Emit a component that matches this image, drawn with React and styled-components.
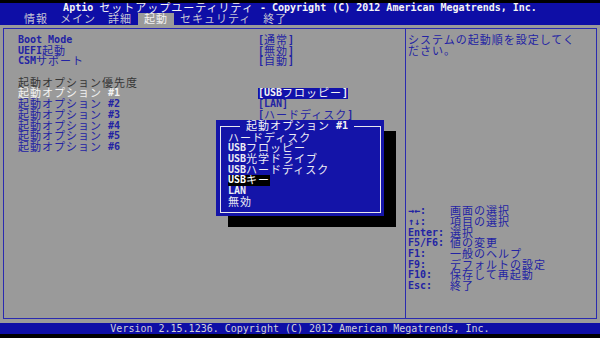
import React from 'react';
import styled, { createGlobalStyle } from 'styled-components';

const ROW = 10.7;

const Global = createGlobalStyle`
  html, body {
    margin: 0;
    padding: 0;
    background: #000;
  }
  * {
    box-sizing: border-box;
  }
`;

const Screen = styled.div`
  position: relative;
  width: 600px;
  height: 338px;
  overflow: hidden;
  background: #000;
  padding-top: 3px;
  font-family: "DejaVu Sans Mono", "Liberation Mono", monospace;
  font-size: 10px;
  font-weight: bold;
  display: flex;
  flex-direction: column;
`;

const Jp = styled.span`
  display: inline-block;
  vertical-align: top;
  position: relative;
  top: -1px;
  height: ${ROW}px;
  line-height: ${ROW}px;
  font-family: "Noto Sans CJK JP", "Noto Sans CJK SC", sans-serif;
  font-size: 11px;
  font-weight: 400;
  letter-spacing: 1px;
`;

// split a string into latin and japanese runs so each CJK glyph takes two cells
const Tx = ({ children }) => {
  const parts = String(children).split(/([\u3000-\u30ff\u3400-\u9fff\uff00-\uffef]+)/);
  return parts.map((p, i) => (i % 2 ? <Jp key={i}>{p}</Jp> : p));
};

const Header = styled.div`
  background: #0e0ea6;
  height: 22px;
`;

const Title = styled.div`
  height: 10px;
  line-height: 10px;
  text-align: center;
  color: #f4f4f4;
  white-space: pre;
`;

const Tabs = styled.div`
  display: flex;
  height: 12px;
  padding-left: 18px;
`;

const Tab = styled.div`
  height: 12px;
  line-height: 12px;
  padding: 1px 6px 0;
  white-space: pre;
  color: ${(p) => (p.$active ? '#f2f2f2' : '#c4c4d4')};
  background: ${(p) => (p.$active ? '#9a9a9a' : 'transparent')};
`;

const Body = styled.div`
  background: #9a9a9a;
  height: 298px;
  padding: 3px 3px 4px 3px;
  display: flex;
  flex-direction: column;
`;

const Frame = styled.div`
  flex: 1;
  display: flex;
  border: 1px solid #2a2ab0;
`;

const MainPane = styled.div`
  width: 402px;
  border-right: 1px solid #2a2ab0;
  padding: 6px 0 0 14px;
`;

const Row = styled.div`
  display: grid;
  grid-template-columns: 240px auto;
  justify-content: start;
  height: ${ROW}px;
  line-height: ${ROW}px;
  white-space: pre;
  color: ${(p) => p.$color || '#2323a4'};
`;

const Value = styled.span`
  color: ${(p) => (p.$selected ? '#f4f4f4' : '#2323a4')};
  background: ${(p) => (p.$selected ? '#1212aa' : 'transparent')};
`;

const HelpPane = styled.div`
  flex: 1;
  padding: 6px 0 0 2px;
  color: #2323a4;
`;

const Line = styled.div`
  height: ${ROW}px;
  line-height: ${ROW}px;
  white-space: pre;
`;

const Keys = styled.div`
  margin-top: ${ROW * 14}px;
  display: grid;
  grid-template-columns: 42px auto;
  justify-content: start;
  grid-auto-rows: ${ROW}px;
  line-height: ${ROW}px;
  white-space: pre;
`;

const Footer = styled.div`
  background: #0e0ea6;
  height: 11px;
  line-height: 11px;
  text-align: center;
  color: #d0d0d8;
  font-weight: normal;
  white-space: pre;
`;

const Popup = styled.div`
  position: absolute;
  left: 216px;
  top: 120px;
  width: 168px;
  background: #1414a8;
  box-shadow: 12px 11px 0 #000;
  padding: 1px 3px 3px 4px;
`;

const PopFrame = styled.fieldset`
  margin: 0;
  padding: 1px 0 4px 7px;
  border: 1px solid #e8e8ee;
  min-width: 0;
`;

const PopTitle = styled.legend`
  margin-left: 12px;
  padding: 0 6px;
  height: ${ROW}px;
  line-height: ${ROW}px;
  color: #f4f4f4;
  white-space: pre;
`;

const Item = styled.div`
  width: fit-content;
  height: ${ROW}px;
  line-height: ${ROW}px;
  white-space: pre;
  color: ${(p) => (p.$selected ? '#ffffff' : '#ececf4')};
  background: ${(p) => (p.$selected ? '#000' : 'transparent')};
`;

const tabs = ['情報', 'メイン', '詳細', '起動', 'セキュリティ', '終了'];

const settings = [
  { label: 'Boot Mode', value: '[通常]' },
  { label: 'UEFI起動', value: '[無効]' },
  { label: 'CSMサポート', value: '[自動]' },
  { label: '' },
  { label: '起動オプション優先度', color: '#363636' },
  { label: '起動オプション #1', value: '[USBフロッピー]', color: '#f2f2f2', selected: true },
  { label: '起動オプション #2', value: '[LAN]' },
  { label: '起動オプション #3', value: '[ハードディスク]' },
  { label: '起動オプション #4' },
  { label: '起動オプション #5' },
  { label: '起動オプション #6' },
];

const keys = [
  ['→←:', '画面の選択'],
  ['↑↓:', '項目の選択'],
  ['Enter:', '選択'],
  ['F5/F6:', '値の変更'],
  ['F1:', '一般のヘルプ'],
  ['F9:', 'デフォルトの設定'],
  ['F10:', '保存して再起動'],
  ['Esc:', '終了'],
];

const options = ['ハードディスク', 'USBフロッピー', 'USB光学ドライブ', 'USBハードディスク', 'USBキー', 'LAN', '無効'];

const App = () => (
  <>
    <Global />
    <Screen>
      <Header>
        <Title>
          <Tx>Aptio セットアップユーティリティ - Copyright (C) 2012 American Megatrends, Inc.</Tx>
        </Title>
        <Tabs>
          {tabs.map((t) => (
            <Tab key={t} $active={t === '起動'}>
              <Tx>{t}</Tx>
            </Tab>
          ))}
        </Tabs>
      </Header>

      <Body>
        <Frame>
          <MainPane>
            {settings.map((s, i) => (
              <Row key={i} $color={s.color}>
                <span>
                  <Tx>{s.label}</Tx>
                </span>
                {s.value ? (
                  <Value $selected={s.selected}>
                    <Tx>{s.value}</Tx>
                  </Value>
                ) : (
                  <span />
                )}
              </Row>
            ))}
          </MainPane>
          <HelpPane>
            <Line><Tx>システムの起動順を設定してく</Tx></Line>
            <Line><Tx>ださい。</Tx></Line>
            <Keys>
              {keys.map(([k, d]) => (
                <React.Fragment key={k}>
                  <span>{k}</span>
                  <span><Tx>{d}</Tx></span>
                </React.Fragment>
              ))}
            </Keys>
          </HelpPane>
        </Frame>
      </Body>

      <Footer>Version 2.15.1236. Copyright (C) 2012 American Megatrends, Inc.</Footer>

      <Popup>
        <PopFrame>
          <PopTitle>
            <Tx>起動オプション #1</Tx>
          </PopTitle>
          {options.map((o) => (
            <Item key={o} $selected={o === 'USBキー'}>
              <Tx>{o}</Tx>
            </Item>
          ))}
        </PopFrame>
      </Popup>
    </Screen>
  </>
);

export default App;
